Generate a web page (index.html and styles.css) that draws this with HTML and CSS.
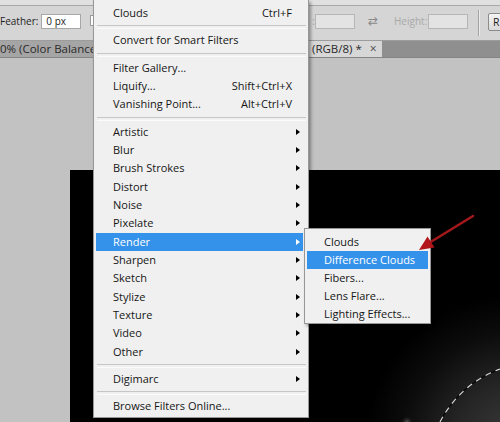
FILE: index.html
```html
<!DOCTYPE html>
<html>
<head>
<meta charset="utf-8">
<link rel="stylesheet" href="styles.css">
</head>
<body>
<div class="app">
  <div class="topstrip"></div>
  <div class="options">
    <div class="opt-left">
      <span class="lbl">Feather:</span>
      <span class="field">0 px</span>
      <span class="check"></span>
    </div>
    <div class="opt-right">
      <span class="lbl colon">:</span>
      <span class="field dis"></span>
      <span class="swap">&#8644;</span>
      <span class="lbl dis-lbl">Height:</span>
      <span class="field dis field-h"></span>
      <span class="vsep"></span>
      <span class="btn">R</span>
    </div>
  </div>
  <div class="tabs">
    <div class="tab tab-in">0% (Color Balance</div>
    <div class="tab tab-on">(RGB/8) * <span class="tab-x">&#215;</span></div>
    <div class="tab-rest"></div>
  </div>
  <div class="workspace">
    <div class="canvas">
      <svg class="canvas-art" width="430" height="252" viewBox="0 0 430 252">
        <defs>
          <radialGradient id="glow" cx="445" cy="275" r="150" gradientUnits="userSpaceOnUse">
            <stop offset="0" stop-color="#3c3c3c"/>
            <stop offset="0.4" stop-color="#262626"/>
            <stop offset="0.75" stop-color="#0c0c0c"/>
            <stop offset="1" stop-color="#000"/>
          </radialGradient>
          <radialGradient id="spot" cx="337" cy="252" r="7" gradientUnits="userSpaceOnUse">
            <stop offset="0" stop-color="#555"/>
            <stop offset="1" stop-color="#000" stop-opacity="0"/>
          </radialGradient>
        </defs>
        <rect x="0" y="0" width="430" height="252" fill="#000"/>
        <rect x="280" y="120" width="150" height="132" fill="url(#glow)"/>
        <rect x="326" y="242" width="22" height="10" fill="url(#spot)"/>
        <path d="M370 252 A110 110 0 0 1 430 199" fill="none" stroke="#0a0a0a" stroke-width="1.4"/>
        <path d="M370 252 A110 110 0 0 1 430 199" fill="none" stroke="#d8d8d8" stroke-width="1.2" stroke-dasharray="6 5"/>
      </svg>
    </div>
  </div>

  <div class="menu">
    <div class="item">Clouds<span class="sc">Ctrl+F</span></div>
    <div class="sep"></div>
    <div class="item">Convert for Smart Filters</div>
    <div class="sep"></div>
    <div class="item">Filter Gallery...</div>
    <div class="item">Liquify...<span class="sc">Shift+Ctrl+X</span></div>
    <div class="item">Vanishing Point...<span class="sc">Alt+Ctrl+V</span></div>
    <div class="sep"></div>
    <div class="item sub">Artistic</div>
    <div class="item sub">Blur</div>
    <div class="item sub">Brush Strokes</div>
    <div class="item sub">Distort</div>
    <div class="item sub">Noise</div>
    <div class="item sub">Pixelate</div>
    <div class="item sub hl">Render</div>
    <div class="item sub">Sharpen</div>
    <div class="item sub">Sketch</div>
    <div class="item sub">Stylize</div>
    <div class="item sub">Texture</div>
    <div class="item sub">Video</div>
    <div class="item sub">Other</div>
    <div class="sep"></div>
    <div class="item sub">Digimarc</div>
    <div class="sep"></div>
    <div class="item">Browse Filters Online...</div>
  </div>

  <div class="submenu">
    <div class="item">Clouds</div>
    <div class="item hl">Difference Clouds</div>
    <div class="item">Fibers...</div>
    <div class="item">Lens Flare...</div>
    <div class="item">Lighting Effects...</div>
  </div>

  <svg class="pointer" width="500" height="422" viewBox="0 0 500 422">
    <line x1="473" y1="216" x2="429" y2="243" stroke="#a3181b" stroke-width="2.6" stroke-linecap="round"/>
    <polygon points="419,250 427.5,236.5 434.5,247.5" fill="#b3161a"/>
  </svg>
</div>
</body>
</html>
```

FILE: styles.css
```css
* {
  box-sizing: border-box;
  margin: 0;
  padding: 0;
}

body {
  margin: 0;
  width: 500px;
  height: 422px;
  overflow: hidden;
  font-family: "Open Sans", "Noto Sans", sans-serif;
}

.app {
  position: relative;
  width: 500px;
  height: 422px;
  display: flex;
  flex-direction: column;
  background: #c2c2c2;
  overflow: hidden;
}

.topstrip {
  height: 6px;
  flex: none;
  background: #e0e0e0;
  border-bottom: 1px solid #a8a8a8;
}

.options {
  height: 34px;
  flex: none;
  display: flex;
  background: #d5d5d5;
  font-size: 10px;
  color: #1e1e1e;
  padding-top: 8px;
  overflow: hidden;
}

.opt-left {
  width: 309px;
  flex: none;
  display: flex;
  align-items: flex-start;
}

.opt-right {
  display: flex;
  align-items: flex-start;
  flex: none;
}

.lbl {
  line-height: 15px;
  white-space: nowrap;
}

.field {
  width: 40px;
  height: 15px;
  margin-left: 3px;
  background: #fff;
  border: 1px solid #a8a8a8;
  padding-left: 4px;
  line-height: 13px;
  font-size: 10px;
  flex: none;
}

.check {
  width: 11px;
  height: 11px;
  margin-left: 9px;
  margin-top: 1px;
  background: #fff;
  border: 1px solid #9a9a9a;
  flex: none;
}

.colon {
  width: 6px;
  text-align: right;
  color: #9c9c9c;
}

.dis {
  margin-left: 0;
  background: #e3e3e3;
  border-color: #b6b6b6;
}

.swap {
  width: 12px;
  margin-left: 13px;
  line-height: 15px;
  font-size: 12px;
  color: #8a8a8a;
  font-family: "DejaVu Sans", sans-serif;
}

.dis-lbl {
  width: 33px;
  margin-left: 14px;
  color: #a9a9a9;
}

.field-h {
  margin-left: 1px;
}

.vsep {
  width: 2px;
  height: 26px;
  margin-top: -4px;
  margin-left: 10px;
  border-left: 1px solid #a2a2a2;
  border-right: 1px solid #ececec;
  flex: none;
}

.btn {
  margin-left: 8px;
  margin-top: -1px;
  width: 30px;
  height: 18px;
  border: 1px solid #8c8c8c;
  border-radius: 2px;
  background: linear-gradient(#f4f4f4, #dadada);
  padding-left: 4px;
  line-height: 16px;
  font-size: 10.5px;
  white-space: nowrap;
  color: #1e1e1e;
  flex: none;
}

.tabs {
  height: 18px;
  flex: none;
  display: flex;
  background: #8f8f8f;
  border-top: 1px solid #9c9c9c;
  border-bottom: 1px solid #858585;
}

.tab {
  font-size: 11.5px;
  line-height: 16px;
  white-space: nowrap;
  overflow: hidden;
  color: #2a2a2a;
  flex: none;
}

.tab-in {
  width: 309px;
  background: #a5a5a5;
}

.tab-on {
  width: 73px;
  background: #d7d7d7;
  padding-left: 3px;
}

.tab-x {
  margin-left: 5px;
  font-size: 12px;
  color: #444;
}

.tab-rest {
  flex: 1;
}

.workspace {
  flex: 1;
  padding: 112px 0 0 70px;
  min-height: 0;
}

.canvas {
  width: 430px;
  height: 252px;
  background: #000;
}

.canvas-art {
  display: block;
}

.menu {
  position: absolute;
  left: 93px;
  top: 0;
  width: 216px;
  background: #f0f0f0;
  border: 1px solid #979797;
  border-top: none;
  padding: 4px 5px 1px 2px;
  box-shadow: 2px 2px 3px rgba(0, 0, 0, 0.35);
  font-size: 11px;
  color: #161616;
}

.item {
  position: relative;
  height: 18.33px;
  line-height: 18.33px;
  padding-left: 17px;
  padding-right: 11px;
  display: flex;
  justify-content: space-between;
  white-space: nowrap;
}

.sc {
  color: #161616;
}

.sub::after {
  content: "";
  position: absolute;
  right: 3px;
  top: 6px;
  border-left: 4px solid #000;
  border-top: 3.5px solid transparent;
  border-bottom: 3.5px solid transparent;
}

.hl {
  background: #3592ea;
  color: #fff;
}

.hl.sub::after {
  border-left-color: #fff;
}

.sep {
  height: 9px;
  margin: 0 -3px 0 1px;
  padding-top: 3px;
}

.sep::before {
  content: "";
  display: block;
  height: 2px;
  border-top: 1px solid #c6c6c6;
  border-bottom: 1px solid #fbfbfb;
}

.submenu {
  position: absolute;
  left: 304px;
  top: 228px;
  width: 127px;
  background: #f0f0f0;
  border: 1px solid #979797;
  padding: 4px 2px 0 2px;
  box-shadow: 2px 2px 3px rgba(0, 0, 0, 0.35);
  font-size: 11px;
  color: #161616;
}

.submenu .item {
  height: 18px;
  line-height: 18px;
}

.pointer {
  position: absolute;
  left: 0;
  top: 0;
  pointer-events: none;
}
```
